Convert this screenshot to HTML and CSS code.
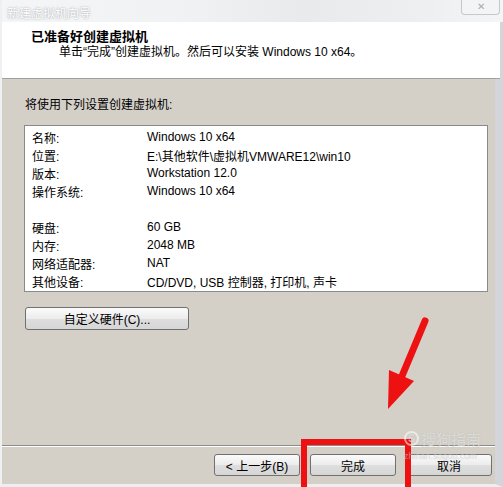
FILE: index.html
```html
<!DOCTYPE html>
<html lang="zh-CN">
<head>
  <meta charset="UTF-8">
  <meta name="viewport" content="width=device-width, initial-scale=1.0">
  <title>新建虚拟机向导</title>
  <link rel="stylesheet" href="styles.css">
</head>
<body>

  <div class="window">
    <!-- Title bar -->
    <div class="titlebar">
      <span class="caption">新建虚拟机向导</span>
      <span class="close">&#x2715;</span>
    </div>

    <!-- Wizard header -->
    <div class="header">
      <div class="header-title">已准备好创建虚拟机</div>
      <div class="header-sub">单击“完成”创建虚拟机。然后可以安装 Windows 10 x64。</div>
    </div>

    <!-- Summary -->
    <div class="content">
      <p class="intro">将使用下列设置创建虚拟机:</p>
      <div class="summary">
        <span>名称:</span><span>Windows 10 x64</span>
        <span>位置:</span><span>E:\其他软件\虚拟机VMWARE12\win10</span>
        <span>版本:</span><span>Workstation 12.0</span>
        <span>操作系统:</span><span>Windows 10 x64</span>
        <span class="blank"></span><span class="blank"></span>
        <span>硬盘:</span><span>60 GB</span>
        <span>内存:</span><span>2048 MB</span>
        <span>网络适配器:</span><span>NAT</span>
        <span>其他设备:</span><span>CD/DVD, USB 控制器, 打印机, 声卡</span>
      </div>
      <button class="btn btn-custom">自定义硬件(C)...</button>
    </div>

    <!-- Footer buttons -->
    <div class="footer">
      <button class="btn">&lt; 上一步(B)</button>
      <button class="btn">完成</button>
      <button class="btn">取消</button>
    </div>
  </div>

  <!-- Annotations drawn over the screenshot -->
  <svg class="arrow" width="503" height="487" viewBox="0 0 503 487">
    <line x1="425" y1="321" x2="402" y2="376" stroke="#ee1111" stroke-width="7" stroke-linecap="round"/>
    <polygon points="388,409 389,370 414,381" fill="#ee1111"/>
  </svg>
  <div class="highlight"></div>
  <div class="watermark">
    <span class="logo">S</span><span>搜狗指南</span>
    <div class="site">zhinan.sogou.com</div>
  </div>

</body>
</html>
```

FILE: styles.css
```css
body {
  margin: 0;
  width: 503px;
  height: 487px;
  overflow: hidden;
  position: relative;
  font-family: "Liberation Sans", "Noto Sans CJK SC", sans-serif;
  font-size: 12px;
  color: #000;
  background-color: #d4d0c8;
}
.window {
  display: flex;
  flex-direction: column;
  height: 487px;
  box-sizing: border-box;
  border-left: 2px solid #eef0f2;
  border-right: 8px solid #d2d6da;
  border-bottom: 3px solid #eceef0;
  background-color: #d4d0c8;
}
.titlebar {
  height: 22px;
  display: flex;
  justify-content: space-between;
  align-items: flex-start;
  background: linear-gradient(90deg, #f4f5f6 0%, #f1f2f3 35%, #e9eaeb 60%, #eeeff0 85%, #f4f5f6 100%);
  margin-right: -8px;
}
.caption {
  padding: 4px 0 0 5px;
  font-size: 12px;
  color: #fff;
  text-shadow: 0 0 2px #a9aeb4, 0 0 1px #c0c4c8;
}
.close {
  width: 39px;
  height: 15px;
  margin-right: 3px;
  box-sizing: border-box;
  border: 1px solid #c6c8ca;
  border-top: none;
  border-radius: 0 0 4px 4px;
  background: #f3f4f5;
  color: #a8aaac;
  font-size: 10px;
  line-height: 14px;
  text-align: center;
}
.header {
  height: 57px;
  box-sizing: border-box;
  background-color: #fff;
  border-bottom: 1px solid #a0a0a0;
  padding: 7px 0 0 29px;
  margin-right: -5px;
}
.header-title {
  font-size: 13px;
  font-weight: bold;
  line-height: 16px;
}
.header-sub {
  padding-left: 28px;
  line-height: 15px;
}
.content {
  flex: 1;
  padding: 19px 7px 0 22px;
}
.intro {
  margin: 0 0 13px 1px;
  line-height: 14px;
}
.summary {
  display: grid;
  grid-template-columns: 115px 1fr;
  grid-auto-rows: 18px;
  align-items: center;
  background-color: #fff;
  border: 1px solid #8a8a8a;
  padding: 2px 0 1px 7px;
}
.btn {
  font-family: "Liberation Sans", "Noto Sans CJK SC", sans-serif;
  font-size: 12px;
  color: #000;
  width: 86px;
  height: 22px;
  padding: 0;
  border: 1px solid #707070;
  border-radius: 3px;
  background: linear-gradient(#fbfbfb, #ececec 50%, #dedede 51%, #d6d6d6);
}
.btn-custom {
  width: 164px;
  height: 23px;
  margin: 15px 0 0 1px;
}
.footer {
  display: flex;
  justify-content: flex-end;
  gap: 10px;
  padding: 8px 3px 8px 0;
  border-top: 1px solid #8c8c8c;
  box-shadow: inset 0 1px 0 #fff;
}
.highlight {
  position: absolute;
  left: 301px;
  top: 439px;
  width: 98px;
  height: 60px;
  border: 6px solid #ee1111;
}
.arrow {
  position: absolute;
  left: 0;
  top: 0;
}
.watermark {
  position: absolute;
  left: 404px;
  top: 428px;
  font-size: 15px;
  color: rgba(255, 255, 255, 0.55);
  text-shadow: 0 0 1px rgba(120, 120, 120, 0.4);
  display: flex;
  flex-wrap: wrap;
  align-items: center;
  width: 95px;
  gap: 2px;
}
.logo {
  width: 15px;
  height: 15px;
  border-radius: 50%;
  border: 2px solid rgba(255, 255, 255, 0.55);
  box-sizing: border-box;
  font-size: 10px;
  line-height: 11px;
  text-align: center;
  font-weight: bold;
}
.site {
  width: 100%;
  font-size: 9px;
  color: rgba(255, 255, 255, 0.35);
}
```
